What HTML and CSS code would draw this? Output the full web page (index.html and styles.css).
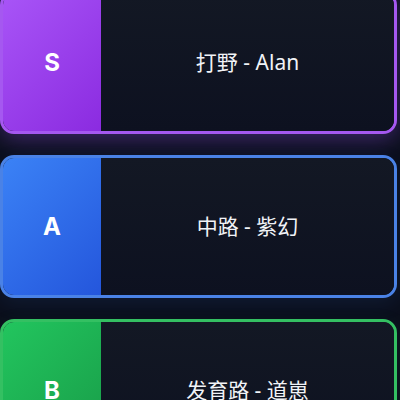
FILE: index.html
```html
<!DOCTYPE html>
<html lang="zh">
<head>
<meta charset="utf-8">
<link rel="stylesheet" href="styles.css">
</head>
<body>
<div class="list">
  <div class="card card-s">
    <div class="tier">S</div>
    <div class="name">打野 - Alan</div>
  </div>
  <div class="card card-a">
    <div class="tier">A</div>
    <div class="name">中路 - 紫幻</div>
  </div>
  <div class="card card-b">
    <div class="tier">B</div>
    <div class="name">发育路 - 道崽</div>
  </div>
</div>
</body>
</html>
```

FILE: styles.css
```css
html, body {
  margin: 0;
  padding: 0;
  background: #0b0f1c;
  overflow: hidden;
  height: 400px;
}
.list {
  display: flex;
  flex-direction: column;
  gap: 21px;
  margin-top: -9px;
  width: 397px;
}
.card {
  display: flex;
  height: 143px;
  box-sizing: border-box;
  border: 3px solid;
  border-radius: 14px;
  overflow: hidden;
  background: #10141f;
}
.card-s {
  border-color: #a558f0;
  box-shadow: 0 6px 22px rgba(150, 80, 240, 0.35);
}
.card-a {
  border-color: #4a82e6;
  box-shadow: 0 6px 20px rgba(59, 130, 246, 0.1);
}
.card-b {
  border-color: #34c062;
  box-shadow: 0 6px 20px rgba(34, 197, 94, 0.1);
}
.tier {
  width: 98px;
  flex: none;
  display: flex;
  align-items: center;
  justify-content: center;
  color: #fff;
  font-family: Inter, Roboto, "Liberation Sans", sans-serif;
  font-weight: 700;
  font-size: 24px;
}
.card-s .tier { background: linear-gradient(135deg, #a855f7, #8b2be0); }
.card-a .tier { background: linear-gradient(135deg, #3b82f6, #2456dc); }
.card-b .tier { background: linear-gradient(135deg, #22c55e, #189a47); }
.name {
  flex: 1;
  display: flex;
  align-items: center;
  justify-content: center;
  padding-bottom: 3px;
  color: #f1f3f7;
  font-family: "Noto Sans", "Noto Sans CJK SC", sans-serif;
  font-size: 21px;
  background: linear-gradient(180deg, #131824, #0d1120);
}
```
